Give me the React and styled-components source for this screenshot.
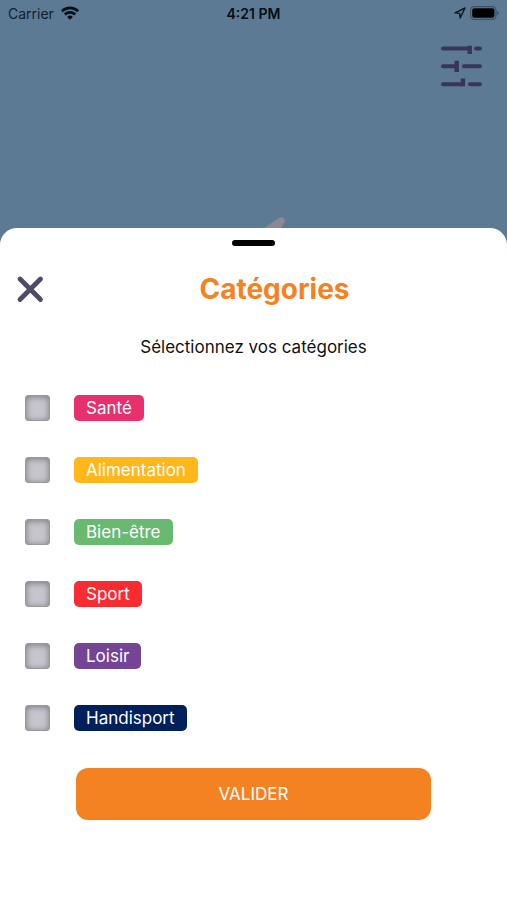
import React from "react";
import styled, { createGlobalStyle } from "styled-components";

const GlobalStyle = createGlobalStyle`
  * { box-sizing: border-box; }
  body {
    margin: 0;
    background: #5d7a94;
    font-family: Inter, "Liberation Sans", sans-serif;
    color: #111;
  }
`;

const Screen = styled.div`
  min-height: 100vh;
  display: flex;
  flex-direction: column;
`;

const Backdrop = styled.header`
  height: 228px;
  display: flex;
  flex-direction: column;
`;

const StatusBar = styled.div`
  display: grid;
  grid-template-columns: 1fr auto 1fr;
  align-items: center;
  height: 26px;
  padding: 0 8px;
  font-size: 14px;
  color: #10202d;
`;

const StatusGroup = styled.div`
  display: flex;
  align-items: center;
  justify-content: ${(p) => p.$align};
  gap: ${(p) => p.$gap};
`;

const Clock = styled.time`
  font-weight: 600;
  color: #060d14;
`;

const FilterButton = styled.button`
  align-self: flex-end;
  margin: 18px 25px 0 0;
  padding: 0;
  border: 0;
  background: none;
  line-height: 0;
`;

const Marker = styled.svg`
  align-self: center;
  margin-top: auto;
`;

const Sheet = styled.main`
  flex: 1;
  display: flex;
  flex-direction: column;
  padding: 12px 16px 80px;
  border-radius: 17px 17px 0 0;
  background: #fff;
`;

const Handle = styled.div`
  align-self: center;
  width: 43px;
  height: 6px;
  border-radius: 3px;
  background: #000;
`;

const TitleRow = styled.div`
  display: grid;
  grid-template-columns: 42px 1fr;
  align-items: center;
  height: 36px;
  margin-top: 25px;
`;

const CloseButton = styled.button`
  justify-self: start;
  padding: 0;
  border: 0;
  background: none;
  line-height: 0;
`;

const Title = styled.h1`
  margin: 0;
  text-align: center;
  font-size: 28px;
  line-height: 36px;
  font-weight: 700;
  color: #f58220;
`;

const Subtitle = styled.p`
  margin: 28px 0 0;
  text-align: center;
  font-size: 17px;
  line-height: 24px;
`;

const CategoryList = styled.ul`
  display: flex;
  flex-direction: column;
  gap: 36px;
  margin: 36px 0 0;
  padding: 0 9px;
  list-style: none;
`;

const Category = styled.label`
  display: flex;
  align-items: center;
  gap: 24px;
`;

const Checkbox = styled.input`
  appearance: none;
  width: 25px;
  height: 26px;
  margin: 0;
  border: 1px solid #98989b;
  border-radius: 3px;
  background: #c6c5cd;
  box-shadow: inset 0 1px 6px #77777b;

  &:checked {
    background: #f58220;
  }
`;

const Badge = styled.span`
  padding: 0 12px;
  border-radius: 5px;
  background: ${(p) => p.$color};
  color: #fff;
  font-size: 17px;
  line-height: 26px;
`;

const SubmitButton = styled.button`
  align-self: center;
  width: 70vw;
  height: 52px;
  margin-top: 37px;
  border: 0;
  border-radius: 12px;
  background: #f58220;
  color: #fff;
  font-family: inherit;
  font-size: 17px;
`;

const categories = [
  { name: "Santé", color: "#e8306f" },
  { name: "Alimentation", color: "#ffb71b" },
  { name: "Bien-être", color: "#6ab971" },
  { name: "Sport", color: "#f92c31" },
  { name: "Loisir", color: "#744595" },
  { name: "Handisport", color: "#00205c" },
];

const WifiIcon = () => (
  <svg width="18" height="14" viewBox="0 0 18 14" aria-hidden="true">
    <g fill="none" stroke="#060d14" strokeWidth="2.6">
      <path d="M0.9 5.2a11.6 11.6 0 0 1 16.2 0" />
      <path d="M3.8 8.5a7.5 7.5 0 0 1 10.4 0" />
    </g>
    <path d="M9 13.8 6.1 10.9a4.2 4.2 0 0 1 5.8 0z" fill="#060d14" />
  </svg>
);

const LocationIcon = () => (
  <svg width="12" height="12" viewBox="0 0 12 12" aria-hidden="true">
    <path
      d="M11 1 1 5.8l4.6.6.6 4.6z"
      fill="none"
      stroke="#0b1620"
      strokeWidth="1.4"
      strokeLinejoin="round"
    />
  </svg>
);

const BatteryIcon = () => (
  <svg width="29" height="14" viewBox="0 0 29 14" aria-hidden="true">
    <rect x="0.6" y="0.6" width="25.4" height="12.8" rx="3.6" fill="none" stroke="#3c5162" strokeWidth="1.1" />
    <rect x="2.2" y="2.3" width="22.2" height="9.4" rx="2" fill="#000" />
    <path d="M27 4.9c2 .6 2 3.6 0 4.2z" fill="#3c5162" />
  </svg>
);

const SlidersIcon = () => (
  <svg width="42" height="44" viewBox="0 0 42 44" fill="none" stroke="#38345c" strokeLinecap="round" aria-hidden="true">
    <path d="M3 4.5h25M36 4.5h4M3 22.3h12M24 22.3h16M3 40.2h20M30 40.2h10" strokeWidth="4" />
    <path d="M29.7 4v3.8M16.7 19v6.8M22.9 36.7v3.3" strokeWidth="4.4" strokeLinecap="square" />
  </svg>
);

const CloseIcon = () => (
  <svg width="28" height="28" viewBox="0 0 28 28" aria-hidden="true">
    <path d="M4 4 24.5 24.5M24.5 4 4 24.5" stroke="#504a68" strokeWidth="4.8" strokeLinecap="round" />
  </svg>
);

export default function App() {
  return (
    <>
      <GlobalStyle />
      <Screen>
        <Backdrop>
          <StatusBar>
            <StatusGroup $align="flex-start" $gap="7px">
              <span>Carrier</span>
              <WifiIcon />
            </StatusGroup>
            <Clock>4:21 PM</Clock>
            <StatusGroup $align="flex-end" $gap="4px">
              <LocationIcon />
              <BatteryIcon />
            </StatusGroup>
          </StatusBar>
          <FilterButton type="button" aria-label="Filtres">
            <SlidersIcon />
          </FilterButton>
          <Marker width="64" height="11" viewBox="0 0 64 11" aria-hidden="true">
            <path d="M42 11 56 1.5Q60 -1 62 1.5T62.500 5L59 11z" fill="#8d8791" />
          </Marker>
        </Backdrop>
        <Sheet>
          <Handle />
          <TitleRow>
            <CloseButton type="button" aria-label="Fermer">
              <CloseIcon />
            </CloseButton>
            <Title>Catégories</Title>
          </TitleRow>
          <Subtitle>Sélectionnez vos catégories</Subtitle>
          <CategoryList>
            {categories.map(({ name, color }) => (
              <li key={name}>
                <Category>
                  <Checkbox type="checkbox" name={name} />
                  <Badge $color={color}>{name}</Badge>
                </Category>
              </li>
            ))}
          </CategoryList>
          <SubmitButton type="button">VALIDER</SubmitButton>
        </Sheet>
      </Screen>
    </>
  );
}
